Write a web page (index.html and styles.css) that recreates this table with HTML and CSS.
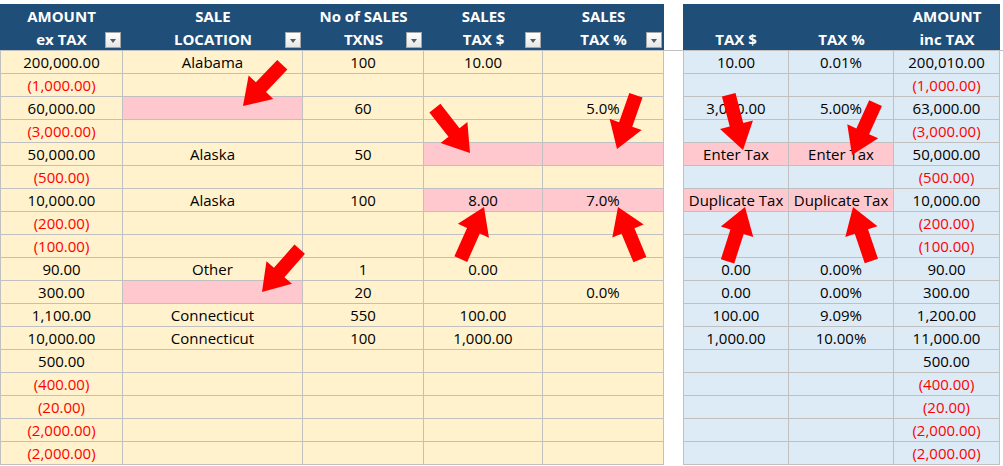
FILE: index.html
```html
<!DOCTYPE html>
<html>
<head>
<meta charset="utf-8">
<title>Sales Tax Sheet</title>
<link rel="stylesheet" href="styles.css">
</head>
<body>
<div class="sheet">
  <div class="head-band">
    <div class="head head-left">
      <div class="hcol w1"><span class="hl">AMOUNT</span><span class="hl">ex TAX</span><i class="filter"></i></div>
      <div class="hcol w2"><span class="hl">SALE</span><span class="hl">LOCATION</span><i class="filter"></i></div>
      <div class="hcol w3"><span class="hl">No of SALES</span><span class="hl">TXNS</span><i class="filter"></i></div>
      <div class="hcol w4"><span class="hl">SALES</span><span class="hl">TAX $</span><i class="filter"></i></div>
      <div class="hcol w5"><span class="hl">SALES</span><span class="hl">TAX %</span><i class="filter"></i></div>
    </div>
    <div class="gap"></div>
    <div class="head head-right">
      <div class="hcol r1"><span class="hl"></span><span class="hl">TAX $</span></div>
      <div class="hcol r2"><span class="hl"></span><span class="hl">TAX %</span></div>
      <div class="hcol r3"><span class="hl">AMOUNT</span><span class="hl">inc TAX</span></div>
    </div>
  </div>

  <div class="body-band">
    <div class="grid grid-left">
      <div class="row"><div class="cell w1">200,000.00</div><div class="cell w2">Alabama</div><div class="cell w3">100</div><div class="cell w4">10.00</div><div class="cell w5"></div></div>
      <div class="row"><div class="cell w1 neg">(1,000.00)</div><div class="cell w2"></div><div class="cell w3"></div><div class="cell w4"></div><div class="cell w5"></div></div>
      <div class="row"><div class="cell w1">60,000.00</div><div class="cell w2 pink"></div><div class="cell w3">60</div><div class="cell w4"></div><div class="cell w5">5.0%</div></div>
      <div class="row"><div class="cell w1 neg">(3,000.00)</div><div class="cell w2"></div><div class="cell w3"></div><div class="cell w4"></div><div class="cell w5"></div></div>
      <div class="row"><div class="cell w1">50,000.00</div><div class="cell w2">Alaska</div><div class="cell w3">50</div><div class="cell w4 pink"></div><div class="cell w5 pink"></div></div>
      <div class="row"><div class="cell w1 neg">(500.00)</div><div class="cell w2"></div><div class="cell w3"></div><div class="cell w4"></div><div class="cell w5"></div></div>
      <div class="row"><div class="cell w1">10,000.00</div><div class="cell w2">Alaska</div><div class="cell w3">100</div><div class="cell w4 pink">8.00</div><div class="cell w5 pink">7.0%</div></div>
      <div class="row"><div class="cell w1 neg">(200.00)</div><div class="cell w2"></div><div class="cell w3"></div><div class="cell w4"></div><div class="cell w5"></div></div>
      <div class="row"><div class="cell w1 neg">(100.00)</div><div class="cell w2"></div><div class="cell w3"></div><div class="cell w4"></div><div class="cell w5"></div></div>
      <div class="row"><div class="cell w1">90.00</div><div class="cell w2">Other</div><div class="cell w3">1</div><div class="cell w4">0.00</div><div class="cell w5"></div></div>
      <div class="row"><div class="cell w1">300.00</div><div class="cell w2 pink"></div><div class="cell w3">20</div><div class="cell w4"></div><div class="cell w5">0.0%</div></div>
      <div class="row"><div class="cell w1">1,100.00</div><div class="cell w2">Connecticut</div><div class="cell w3">550</div><div class="cell w4">100.00</div><div class="cell w5"></div></div>
      <div class="row"><div class="cell w1">10,000.00</div><div class="cell w2">Connecticut</div><div class="cell w3">100</div><div class="cell w4">1,000.00</div><div class="cell w5"></div></div>
      <div class="row"><div class="cell w1">500.00</div><div class="cell w2"></div><div class="cell w3"></div><div class="cell w4"></div><div class="cell w5"></div></div>
      <div class="row"><div class="cell w1 neg">(400.00)</div><div class="cell w2"></div><div class="cell w3"></div><div class="cell w4"></div><div class="cell w5"></div></div>
      <div class="row"><div class="cell w1 neg">(20.00)</div><div class="cell w2"></div><div class="cell w3"></div><div class="cell w4"></div><div class="cell w5"></div></div>
      <div class="row"><div class="cell w1 neg">(2,000.00)</div><div class="cell w2"></div><div class="cell w3"></div><div class="cell w4"></div><div class="cell w5"></div></div>
      <div class="row"><div class="cell w1 neg">(2,000.00)</div><div class="cell w2"></div><div class="cell w3"></div><div class="cell w4"></div><div class="cell w5"></div></div>
    </div>
    <div class="gap"></div>
    <div class="grid grid-right">
      <div class="row"><div class="cell r1">10.00</div><div class="cell r2">0.01%</div><div class="cell r3">200,010.00</div></div>
      <div class="row"><div class="cell r1"></div><div class="cell r2"></div><div class="cell r3 neg">(1,000.00)</div></div>
      <div class="row"><div class="cell r1">3,000.00</div><div class="cell r2">5.00%</div><div class="cell r3">63,000.00</div></div>
      <div class="row"><div class="cell r1"></div><div class="cell r2"></div><div class="cell r3 neg">(3,000.00)</div></div>
      <div class="row"><div class="cell r1 pink">Enter Tax</div><div class="cell r2 pink">Enter Tax</div><div class="cell r3">50,000.00</div></div>
      <div class="row"><div class="cell r1"></div><div class="cell r2"></div><div class="cell r3 neg">(500.00)</div></div>
      <div class="row"><div class="cell r1 pink">Duplicate Tax</div><div class="cell r2 pink">Duplicate Tax</div><div class="cell r3">10,000.00</div></div>
      <div class="row"><div class="cell r1"></div><div class="cell r2"></div><div class="cell r3 neg">(200.00)</div></div>
      <div class="row"><div class="cell r1"></div><div class="cell r2"></div><div class="cell r3 neg">(100.00)</div></div>
      <div class="row"><div class="cell r1">0.00</div><div class="cell r2">0.00%</div><div class="cell r3">90.00</div></div>
      <div class="row"><div class="cell r1">0.00</div><div class="cell r2">0.00%</div><div class="cell r3">300.00</div></div>
      <div class="row"><div class="cell r1">100.00</div><div class="cell r2">9.09%</div><div class="cell r3">1,200.00</div></div>
      <div class="row"><div class="cell r1">1,000.00</div><div class="cell r2">10.00%</div><div class="cell r3">11,000.00</div></div>
      <div class="row"><div class="cell r1"></div><div class="cell r2"></div><div class="cell r3">500.00</div></div>
      <div class="row"><div class="cell r1"></div><div class="cell r2"></div><div class="cell r3 neg">(400.00)</div></div>
      <div class="row"><div class="cell r1"></div><div class="cell r2"></div><div class="cell r3 neg">(20.00)</div></div>
      <div class="row"><div class="cell r1"></div><div class="cell r2"></div><div class="cell r3 neg">(2,000.00)</div></div>
      <div class="row"><div class="cell r1"></div><div class="cell r2"></div><div class="cell r3 neg">(2,000.00)</div></div>
    </div>
  </div>

  <svg class="arrows" width="1003" height="466" viewBox="0 0 1003 466" xmlns="http://www.w3.org/2000/svg">
    <defs>
      <polygon id="arrow" points="0,0 -26,-17 -26,-7 -57,-7 -57,7 -26,7 -26,17"/>
    </defs>
    <g fill="#ff0000">
      <use href="#arrow" transform="translate(243,106) rotate(133.6)"/>
      <use href="#arrow" transform="translate(470,153) rotate(52)"/>
      <use href="#arrow" transform="translate(617,149) rotate(109.4)"/>
      <use href="#arrow" transform="translate(743,150) rotate(75.5)"/>
      <use href="#arrow" transform="translate(852,155) rotate(114.4)"/>
      <use href="#arrow" transform="translate(484,207) rotate(-66)"/>
      <use href="#arrow" transform="translate(618,207) rotate(-112.6)"/>
      <use href="#arrow" transform="translate(745,207) rotate(-72.2)"/>
      <use href="#arrow" transform="translate(853,207) rotate(-108.8)"/>
      <use href="#arrow" transform="translate(262,292) rotate(131.4)"/>
    </g>
  </svg>
</div>
</body>
</html>
```

FILE: styles.css
```css
html, body {
  margin: 0;
  padding: 0;
  background: #ffffff;
  overflow: hidden;
}

body {
  font-family: "Open Sans", "Liberation Sans", sans-serif;
  font-size: 15px;
  color: #000000;
}

.sheet {
  position: relative;
  width: 1003px;
  height: 466px;
  padding-top: 4px;
  box-sizing: border-box;
}

/* ---------- header band ---------- */
.head-band {
  display: flex;
  height: 46px;
  border-bottom: 1px solid #c0c0c0;
}

.head {
  display: flex;
  background: #1f4e78;
  color: #ffffff;
  font-weight: 700;
}

.hcol {
  position: relative;
  display: flex;
  flex-direction: column;
}

.hl {
  box-sizing: border-box;
  height: 23px;
  line-height: 22px;
  padding-top: 1px;
  text-align: center;
  white-space: nowrap;
}

.filter {
  position: absolute;
  right: 2px;
  bottom: 2px;
  width: 14px;
  height: 14px;
  border: 1px solid #a6a6a6;
  background: linear-gradient(#ffffff, #e6e6e6);
}

.filter::after {
  content: "";
  position: absolute;
  left: 4px;
  top: 6px;
  border-left: 3.5px solid transparent;
  border-right: 3.5px solid transparent;
  border-top: 4px solid #595959;
}

.gap {
  width: 19px;
  flex: none;
}

/* ---------- body ---------- */
.body-band {
  display: flex;
}

.grid {
  display: flex;
  flex-direction: column;
}

.row {
  display: flex;
  height: 23px;
}

.cell {
  box-sizing: border-box;
  height: 23px;
  border-right: 1px solid #c0c0c0;
  border-bottom: 1px solid #c0c0c0;
  display: flex;
  align-items: center;
  justify-content: center;
  white-space: nowrap;
}

.grid-left .cell {
  background: #fff2cc;
}

.grid-right .cell {
  background: #ddebf7;
}

.grid .cell.pink {
  background: #ffc7ce;
}

.neg {
  color: #ff0000;
}

/* column widths (left table) */
.w1 { width: 123px; }
.w2 { width: 180px; }
.w3 { width: 121px; }
.w4 { width: 119px; }
.w5 { width: 121px; }

.cell.w1 { border-left: 1px solid #c0c0c0; }

/* column widths (right table) */
.r1 { width: 106px; }
.r2 { width: 105px; }
.r3 { width: 106px; }

.cell.r1 { border-left: 1px solid #c0c0c0; }

/* ---------- arrow overlay ---------- */
.arrows {
  position: absolute;
  left: 0;
  top: 0;
  pointer-events: none;
}
```
